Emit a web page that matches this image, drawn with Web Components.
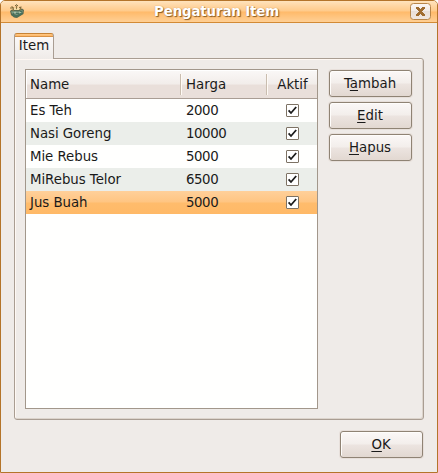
<!DOCTYPE html>
<html lang="id">
<head>
<meta charset="utf-8">
<title>Pengaturan Item</title>
<style>
html,body{margin:0;padding:0}
body{width:438px;height:473px;overflow:hidden;background:#fff;font:13.33px/16px "DejaVu Sans",sans-serif;color:#1a1a1a}
</style>
</head>
<body>
<app-window caption="Pengaturan Item">
  <tab-panel label="Item">
    <item-table></item-table>
    <button-column>
      <push-button>T<u>a</u>mbah</push-button>
      <push-button><u>E</u>dit</push-button>
      <push-button><u>H</u>apus</push-button>
    </button-column>
  </tab-panel>
  <push-button slot="actions"><u>O</u>K</push-button>
</app-window>
<script>
class Base extends HTMLElement{
  connectedCallback(){
    if(this.shadowRoot)return;
    this.attachShadow({mode:'open'}).innerHTML='<style>*{box-sizing:border-box}</style>'+this.render();
  }
}

class AppIcon extends Base{
  render(){return `<style>:host{display:block;width:16px;height:16px}svg{display:block}</style>
  <svg width="16" height="16" viewBox="0 0 16 16">
    <path d="M1 8 3 6.500 9 7 13 5.500 15 7 14.500 11 8 15 5 14.500 2 12z" fill="#5b6a50"/>
    <path d="M2 8.500 6 8 9 8.500 13.500 7 13.500 9.500 8 12 3 10.500z" fill="#7a9c86"/>
    <path d="M3 11.500 6.500 13.200 9 12.700 13.500 10" stroke="#47705c" stroke-width="1.800" fill="none"/>
    <path d="M2.500 3.500 5 5.500 4 8M7.500 2.500V6M11.500 4V7" stroke="#8b7442" stroke-width="1.300" fill="none"/>
    <path d="M1 5h3M6 3 7.500 1.500 9 3M10 4.500 12.500 4" stroke="#7c6a3c" fill="none"/>
    <path d="M5 5h2v2H5zM8 5h2v2H8z" fill="#f0dda8"/><path d="M5 9h2v1H5zM10 9h2v1h-2z" fill="#a9bda4"/>
    <path d="M7 10h3v1H7zM4 10h1v1H4zM11 8h2v1h-2z" fill="#47705e"/>
  </svg>`}
}

class CloseButton extends Base{
  render(){return `<style>:host{display:block;width:21px;height:17px}svg{display:block}</style>
  <svg width="21" height="17" viewBox="0 0 21 17">
    <defs><linearGradient id="g" x2="0" y2="1"><stop stop-color="#fbf6f3"/><stop offset=".5" stop-color="#f2ebe7"/><stop offset=".5" stop-color="#e9dfd9"/><stop offset="1" stop-color="#f1e7e0"/></linearGradient></defs>
    <rect x=".5" y=".5" width="20" height="16" rx="3" fill="url(#g)" stroke="#b8864a"/>
    <path shape-rendering="crispEdges" fill="#a06c30" d="M6 4h3v1h1v1h1V5h1V4h3v2h-1v1h-1v1h-1v1h1v1h1v1h1v2h-3v-1h-1v-1h-1v1H9v1H6v-2h1v-1h1V9h1V8H8V7H7V6H6z"/>
  </svg>`}
}

class AppWindow extends Base{
  render(){return `<style>
  :host{display:flex;flex-direction:column;box-sizing:border-box;width:438px;height:473px;border:1px solid #b4742a;border-radius:5px 5px 0 0;background:#efebe8;overflow:hidden}
  header{flex:none;height:22px;display:grid;grid-template-columns:28px 1fr 28px;align-items:center;border-bottom:1px solid #d28a35;background:linear-gradient(#ffe3bd 0,#ffd6a2 5px,#ffca8a 10px,#ffba6a 11px,#ffc580 16px,#ffcf94 21px)}
  app-icon{margin:-1px 0 0 8px}
  h1{margin:0;padding-right:5px;font:bold 13.33px/20px "DejaVu Sans",sans-serif;letter-spacing:-.12px;text-align:center;color:#fff;text-shadow:1px 1px 1px #8a5a22,0 0 1px #bd8548}
  close-button{margin:0 0 0 1px}
  main{flex:1;display:flex;flex-direction:column;padding:10px 13px 0}
  footer{display:flex;justify-content:flex-end;padding:11px 1px 14px 0}
  </style>
  <header><app-icon></app-icon><h1>${this.getAttribute('caption')}</h1><close-button></close-button></header>
  <main><slot></slot><footer><slot name="actions"></slot></footer></main>`}
}

class TabPanel extends Base{
  render(){return `<style>
  :host{display:flex;flex-direction:column;flex:1}
  .tab{width:40px;height:26px;margin-bottom:-1px;z-index:1;border:1px solid #a99d92;border-top-color:#c78234;border-bottom:0;border-radius:3px 3px 0 0;background:linear-gradient(#ffc987 0,#ffb765 2px,#d89246 2px,#d89246 3px,#fbf9f8 3px,#efebe8 25px);text-align:center;padding-top:4px}
  .pane{flex:1;display:flex;gap:11px;padding:10px;border:1px solid #a99d92;border-radius:0 3px 3px 3px;box-shadow:inset 1px 1px #fff8f3,inset -1px -1px #dcd4cc}
  </style><div class="tab">${this.getAttribute('label')}</div><div class="pane"><slot></slot></div>`}
}

class ButtonColumn extends Base{
  render(){return `<style>:host{display:flex;flex-direction:column;gap:5px;padding-top:1px}</style><slot></slot>`}
}

class PushButton extends Base{
  render(){return `<style>
  :host{display:flex;box-sizing:border-box;width:83px;height:27px;align-items:center;justify-content:center;border:1px solid #8f8374;border-radius:3px;background:linear-gradient(#fbf8f7 0,#f3eeeb 48%,#ece4e0 52%,#e2d8d1);box-shadow:inset 1px 1px #fffdfb,0 0 0 1px #e7dfda}
  span{white-space:nowrap;margin-right:1px}
  ::slotted(u){text-underline-offset:2px;text-decoration-thickness:1px;text-decoration-skip-ink:none}
  </style><span><slot></slot></span>`}
}

class CheckMark extends Base{
  render(){return `<style>:host{display:block;width:13px;height:13px}svg{display:block}</style>
  <svg width="13" height="13" viewBox="0 0 13 13"><rect x=".5" y=".5" width="12" height="12" rx=".5" fill="#fff" stroke="#7d7264"/>
  <path d="M2.600 6.300 5 9 10.200 3" fill="none" stroke="#1c1c1c" stroke-width="1.800"/></svg>`}
}

class ItemTable extends Base{
  render(){
    const rows=[['Es Teh',2000],['Nasi Goreng',10000],['Mie Rebus',5000],['MiRebus Telor',6500],['Jus Buah',5000]];
    return `<style>
    :host{display:block;box-sizing:border-box;width:293px;height:340px;border:1px solid #a2978b;background:#fffffe}
    .row,.head{display:grid;grid-template-columns:155px 86px 50px;align-items:center}
    .head{height:29px;border-bottom:1px solid #a99d94;background:linear-gradient(#faf8f7,#f2edea 50%,#e9dfda 54%,#e9dfda);box-shadow:inset 1px 1px #fff}
    .head span{display:flex;align-items:center;height:21px;padding:2px 0 0 4px;border-right:1px solid #c9bdaf;box-shadow:1px 0 #fffaf5}
    .head span:last-child{border:0;box-shadow:none;justify-content:center;padding:2px 0 0 1px}
    .head span:nth-child(2){padding-left:5px}
    .row{height:23px}
    .row span{padding-left:4px;letter-spacing:-.04px}
    .row span:nth-child(2){padding-left:5px;letter-spacing:-.42px}
    .row:nth-child(odd){background:#ebeeea}
    .row:nth-child(even){background:#fffffe}
    .row:last-child{background:linear-gradient(#ffd09a 0,#ffc582 48%,#ffbc6c 52%,#ffb967)}
    check-mark{margin-left:19px}
    </style><div class="head"><span>Name</span><span>Harga</span><span>Aktif</span></div>`+
    rows.map(r=>`<div class="row"><span>${r[0]}</span><span>${r[1]}</span><check-mark></check-mark></div>`).join('');
  }
}
for(const [n,c] of Object.entries({'app-icon':AppIcon,'close-button':CloseButton,'app-window':AppWindow,'tab-panel':TabPanel,'button-column':ButtonColumn,'push-button':PushButton,'check-mark':CheckMark,'item-table':ItemTable}))customElements.define(n,c);
</script>
</body>
</html>
